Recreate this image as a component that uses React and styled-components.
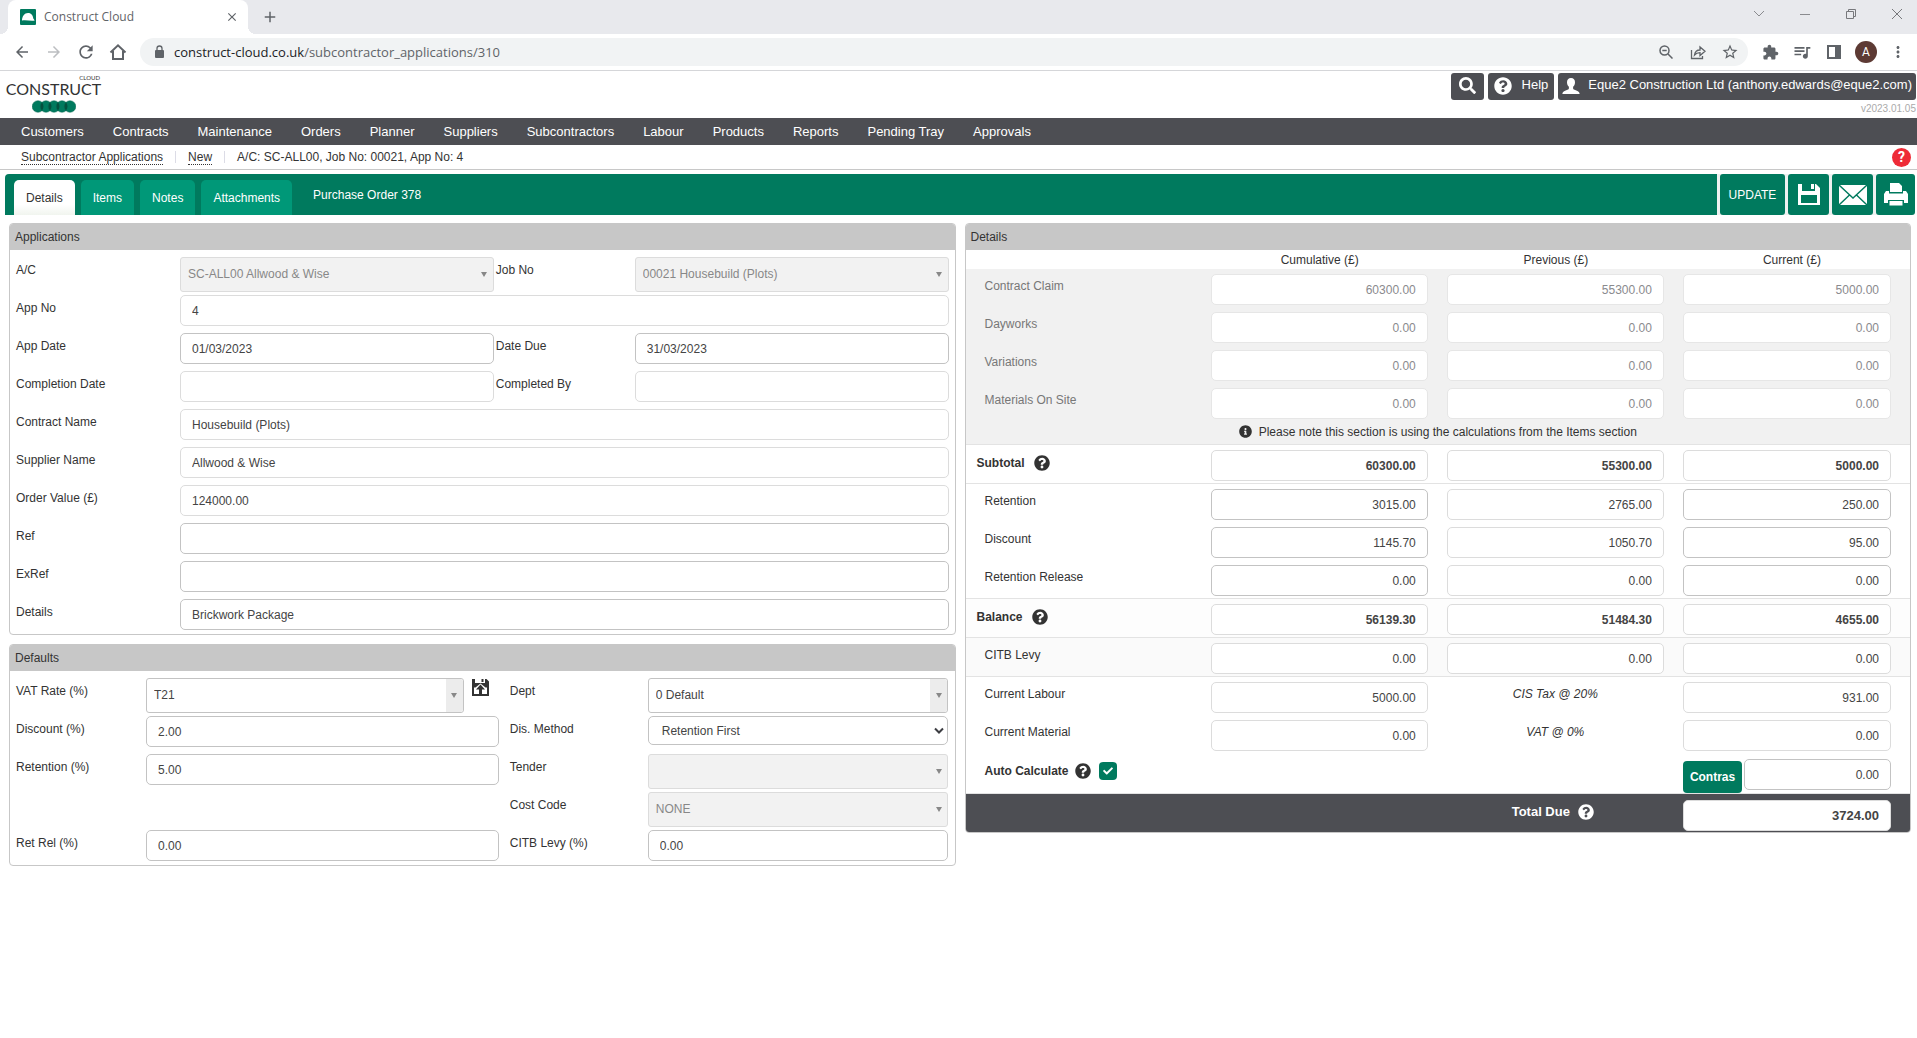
import React from 'react'
import styled, { createGlobalStyle, css } from 'styled-components'
import {
  MdArrowBack, MdArrowForward, MdRefresh, MdStarOutline,
  MdQueueMusic, MdMoreVert, MdClose, MdAdd,
} from 'react-icons/md'
import { FaQuestionCircle, FaInfoCircle, FaSearch, FaCheck } from 'react-icons/fa'

const GlobalStyle = createGlobalStyle`
  * { box-sizing: border-box; }
  body {
    margin: 0;
    background: #fff;
    color: #333;
    font-family: "Liberation Sans", Arial, sans-serif;
    font-size: 12px;
    line-height: 14px;
  }
  button, input, select { font: inherit; color: inherit; }
  a { color: inherit; text-decoration: none; }
`

/* ---------- icons ---------- */

const HelmetIcon = () => (
  <svg width="16" height="16" viewBox="0 0 16 16">
    <rect width="16" height="16" rx="1" fill="#007a5e" />
    <path d="M2 11.500c0-4 2.500-7.500 6-7.500 3.500 0 5 2.500 5.300 5.500l1.400 2c-4 .7-8.500-.8-12.700 0z" fill="#fff" />
  </svg>
)

const HomeIcon = () => (
  <svg width="18" height="18" viewBox="0 0 18 18" fill="none" stroke="#5f6368" strokeWidth="2">
    <path d="M1.500 9.500 9 2.300l7.500 7.200M4 8v8h10V8" />
  </svg>
)

const LockIcon = () => (
  <svg width="14" height="14" viewBox="0 0 14 14">
    <rect x="3" y="5" width="9" height="8" rx="1" fill="#5f6368" />
    <path d="M5 6V3.500a2.500 2.500 0 0 1 5 0V6" fill="none" stroke="#5f6368" strokeWidth="1.300" />
  </svg>
)

const ZoomOutIcon = () => (
  <svg width="14" height="14" viewBox="0 0 14 14" fill="none" stroke="#5f6368" strokeWidth="1.500">
    <circle cx="5.500" cy="5.500" r="4.500" />
    <path d="M9 9l4.500 4.500M3.300 5.500h4.400" />
  </svg>
)

const ShareIcon = () => (
  <svg width="16" height="16" viewBox="0 0 16 16" fill="none" stroke="#5f6368" strokeWidth="1.300">
    <path d="M1.500 6v8.500h11V12M4.500 11c.5-3.500 2.500-5 5.500-5V3l5 4.300-5 4.200V8.700c-2.500 0-4 .6-5.500 2.300z" />
  </svg>
)

const PuzzleIcon = () => (
  <svg width="17" height="17" viewBox="0 0 24 24" fill="#5f6368">
    <path d="M20.500 11H19V7c0-1.100-.9-2-2-2h-4V3.500C13 2.120 11.880 1 10.500 1S8 2.120 8 3.500V5H4c-1.100 0-2 .9-2 2v3.800h1.500c1.490 0 2.700 1.210 2.700 2.700s-1.210 2.700-2.700 2.700H2V20c0 1.100.9 2 2 2h3.800v-1.500c0-1.490 1.210-2.700 2.700-2.700s2.700 1.210 2.700 2.700V22H17c1.100 0 2-.9 2-2v-4h1.500c1.380 0 2.500-1.120 2.500-2.500S21.880 11 20.500 11z" />
  </svg>
)

const SidePanelIcon = () => (
  <svg width="14" height="14" viewBox="0 0 14 14">
    <path d="M0 0h14v14H0zM2 2v10h6V2z" fill="#5f6368" fillRule="evenodd" />
  </svg>
)

const UserIcon = () => (
  <svg width="18" height="16" viewBox="0 0 18 16" fill="#fff">
    <path d="M9 0c2.600 0 4 1.700 4 4.200 0 2-.8 3.700-1.900 4.600v1.500c0 .8.500 1.200 1.400 1.500 2.500.9 4.900 1.600 5.200 4.200H.3c.3-2.600 2.700-3.300 5.200-4.200.9-.3 1.400-.7 1.400-1.500V8.800C5.800 7.900 5 6.200 5 4.200 5 1.700 6.400 0 9 0z" />
  </svg>
)

const FloppyIcon = () => (
  <svg width="22" height="21" viewBox="0 0 22 21">
    <path fillRule="evenodd" fill="#fff" d="M0 0h4v7h13V0h1l4 4v17H0zM3 11v8h16v-8zM13 0h3v5h-3z" />
  </svg>
)

const FloppyUpIcon = () => (
  <svg width="17" height="17" viewBox="0 0 17 17">
    <path fillRule="evenodd" fill="#333" d="M0 0h3v4h10V0h1.500L17 2.500V17H0zM2 8.500V15h13V8.500h-1.500L8.500 4.500l-5 4zM9.500 0h2v3h-2z" />
    <path fill="#333" d="M8.500 5.500 13 10.500h-3V15H7v-4.500H4z" />
  </svg>
)

const MailIcon = () => (
  <svg width="28" height="20" viewBox="0 0 28 20">
    <rect width="28" height="20" fill="#fff" />
    <path d="M0 0l14 13L28 0M0 20l10.500-10M28 20 17.500 10" fill="none" stroke="#007a5e" strokeWidth="1.400" />
  </svg>
)

const PrintIcon = () => (
  <svg width="24" height="23" viewBox="0 0 24 23" fill="#fff">
    <path d="M6 0h9l3 3v6H6zM0 11l2-3h3v2.500h14V8h3l2 3v9h-4v-3H4v3H0zM5.500 18h13v4.500h-13z" />
  </svg>
)

const Chevron = () => (
  <svg width="10" height="8" viewBox="0 0 10 8" fill="none" stroke="#3c3d42" strokeWidth="2">
    <path d="M1 1.500l4 4 4-4" />
  </svg>
)

/* ---------- browser frame ---------- */

const TabStrip = styled.div`
  display: flex;
  align-items: flex-end;
  height: 34px;
  padding-left: 8px;
  background: #e8e9ed;
`
const BrowserTab = styled.div`
  position: relative;
  display: flex;
  align-items: center;
  gap: 8px;
  width: 240px;
  height: 34px;
  padding: 0 8px 0 12px;
  border-radius: 8px 8px 0 0;
  background: #fff;
  color: #5f6368;
  font: 12px/16px "Open Sans", sans-serif;
  span { flex: 1; }
  &::before, &::after {
    content: '';
    position: absolute;
    bottom: 0;
    width: 8px;
    height: 8px;
  }
  &::before {
    left: -8px;
    background: radial-gradient(circle at 0 0, transparent 8px, #fff 8px);
  }
  &::after {
    right: -8px;
    background: radial-gradient(circle at 100% 0, transparent 8px, #fff 8px);
  }
`
const IconButton = styled.button`
  display: flex;
  align-items: center;
  justify-content: center;
  width: ${p => p.$width || 32}px;
  height: 28px;
  padding: 0;
  border: 0;
  background: none;
  color: ${p => (p.$faded ? '#bcbec1' : '#5f6368')};
  font-size: ${p => p.$size || 18}px;
`
const NewTab = styled(IconButton)`
  margin: 0 auto 3px 8px;
`
const WindowControls = styled.div`
  display: flex;
  align-self: flex-start;
  margin-right: -3px;
`
const BrowserBar = styled.div`
  display: flex;
  align-items: center;
  height: 37px;
  padding: 0 3px 0 6px;
  border-bottom: 1px solid #d5d6d9;
`
const AddressBar = styled.div`
  display: flex;
  align-items: center;
  flex: 1;
  height: 28px;
  margin: 0 6px;
  padding: 0 2px 0 12px;
  border-radius: 14px;
  background: #f1f3f4;
  color: #5f6368;
`
const AddressInput = styled.div`
  flex: 1;
  margin-left: 8px;
  font: 13px/20px "Open Sans", sans-serif;
  b { color: #202124; font-weight: 400; }
`
const Avatar = styled.span`
  display: flex;
  align-items: center;
  justify-content: center;
  width: 22px;
  height: 22px;
  margin: 0 5px;
  border-radius: 50%;
  background: #5d3a34;
  color: #fff;
  font-family: Roboto, sans-serif;
`

/* ---------- application header ---------- */

const Header = styled.header`
  display: flex;
  justify-content: space-between;
  height: 47px;
  padding: 2px 1px 0 7px;
`
const Logo = styled.a`
  display: flex;
  flex-direction: column;
  align-items: center;
  width: 93px;
  padding-top: 2px;
  color: #333;
  font-family: Lato, sans-serif;
  font-size: 16px;
  line-height: 16px;
  small {
    align-self: flex-end;
    font-size: 6px;
    line-height: 6px;
  }
  svg { margin-top: 3px; }
`
const HeaderSide = styled.div`
  display: flex;
  flex-direction: column;
  align-items: flex-end;
`
const HeaderButtons = styled.div`
  display: flex;
  gap: 4px;
`
const HeaderButton = styled.button`
  display: flex;
  align-items: center;
  gap: ${p => p.$gap || 0}px;
  height: 27px;
  padding: 0 ${p => p.$pad || 8}px 4px;
  border: 0;
  border-radius: 3px;
  background: #4d4e53;
  color: #fff;
  font-size: 13px;
  svg { position: relative; top: 1px; }
`
const Version = styled.span`
  color: #aaa;
  font-size: 10px;
  margin-top: 2px;
`
const Nav = styled.nav`
  display: flex;
  align-items: center;
  gap: 29px;
  height: 27px;
  padding-left: 21px;
  background: #4d4e53;
  color: #fff;
  font-size: 13px;
`
const Breadcrumb = styled.div`
  display: flex;
  align-items: center;
  height: 25px;
  padding: 0 6px 0 21px;
  border-bottom: 1px solid #c8c8c8;
  a { border-bottom: 1px dotted #333; }
  i {
    width: 1px;
    height: 12px;
    margin: 0 12px;
    background: #dcdce6;
  }
`
const PageHelp = styled.button`
  width: 19px;
  height: 19px;
  margin-left: auto;
  padding: 0;
  border: 0;
  border-radius: 50%;
  background: #ee2b37;
  color: #fff;
  font: 700 14px/19px Roboto, sans-serif;
`

/* ---------- tabs ---------- */

const TabRow = styled.div`
  display: flex;
  gap: 3px;
  height: 41px;
  margin: 4px 2px 0 5px;
  border-radius: 4px;
  background: #eef1f0;
`
const TabBar = styled.div`
  display: flex;
  align-items: flex-end;
  gap: 6px;
  flex: 1;
  padding-left: 9px;
  border-radius: 4px 0 0 0;
  background: #007a5e;
  color: #fff;
`
const Tab = styled.button`
  height: 35px;
  padding: 0 12px;
  border: 0;
  border-radius: 5px 5px 0 0;
  background: ${p => (p.$active ? 'linear-gradient(#fff 70%, #f1f5ef)' : '#009878')};
  color: ${p => (p.$active ? '#333' : '#fff')};
`
const TabTitle = styled.span`
  align-self: center;
  padding-left: 15px;
`
const ActionButton = styled.button`
  display: flex;
  align-items: center;
  justify-content: center;
  width: ${p => p.$width || 41}px;
  padding: 0;
  border: 0;
  border-radius: 3px;
  background: #007a5e;
  color: #fff;
`

/* ---------- panels and fields ---------- */

const Main = styled.main`
  display: grid;
  grid-template-columns: 1fr 1fr;
  align-items: start;
  gap: 9px;
  padding: 8px 6px 8px 9px;
`
const Column = styled.div`
  display: grid;
  gap: 9px;
`
const Panel = styled.section`
  border: 1px solid #c7c7c7;
  border-radius: 4px;
  overflow: hidden;
`
const PanelTitle = styled.h2`
  margin: 0;
  padding: 6px 5px;
  background: #c7c7c7;
  font-size: 12px;
  font-weight: 400;
`
const FieldGrid = styled.div`
  display: grid;
  grid-template-columns: ${p => p.$columns};
  grid-auto-rows: 31px;
  row-gap: 7px;
  padding: 7px 6px 4px;
`
const Label = styled.label`
  padding: 6px 0 0 ${p => p.$indent || 0}px;
`
const fieldBorder = css`
  border: 1px solid ${p => (p.$muted || p.disabled ? '#dcdcdc' : '#c3c3c3')};
  border-radius: 5px;
`
const Input = styled.input`
  ${fieldBorder}
  width: 100%;
  height: 31px;
  min-width: 0;
  padding: 1px 11px 0;
  background: #fff;
  color: #444;
  grid-column: ${p => (p.$wide ? '2 / -1' : 'auto')};
`
const SelectWrap = styled.div`
  position: relative;
  flex: 1;
`
const Select = styled.select`
  ${fieldBorder}
  display: block;
  width: 100%;
  height: ${p => (p.$plain ? 29 : 35)}px;
  padding: 0 20px ${p => (p.$plain ? '0 13px' : '2px 7px')};
  border-radius: ${p => (p.$plain ? 5 : 3)}px;
  appearance: none;
  background: ${p => (p.disabled ? '#f2f2f2' : '#fff')};
  color: ${p => (p.disabled ? '#888' : '#444')};
  opacity: 1;
`
const Arrow = styled.span`
  position: absolute;
  top: 1px;
  right: 1px;
  display: flex;
  align-items: center;
  justify-content: center;
  width: 17px;
  height: ${p => (p.$plain ? 27 : 33)}px;
  border-radius: 0 3px 3px 0;
  background: ${p => (p.$shaded ? '#ececec' : 'none')};
  pointer-events: none;
`
const WithIcon = styled.div`
  display: flex;
  align-items: flex-start;
  gap: 8px;
  padding-right: 10px;
  button { width: 17px; padding: 1px 0; border: 0; background: none; }
`

const Triangle = () => (
  <svg width="6" height="5" viewBox="0 0 6 5"><path d="M0 0h6L3 5z" fill="#888" /></svg>
)

const Dropdown = ({ id, value, disabled, plain }) => (
  <SelectWrap>
    <Select id={id} disabled={disabled} $plain={plain} defaultValue={value}>
      <option>{value}</option>
    </Select>
    <Arrow $shaded={!disabled && !plain} $plain={plain}>{plain ? <Chevron /> : <Triangle />}</Arrow>
  </SelectWrap>
)

const TextField = ({ id, label, value = '', indent, wide, muted }) => (
  <>
    <Label htmlFor={id} $indent={indent}>{label}</Label>
    <Input id={id} defaultValue={value} readOnly={muted} $wide={wide} $muted={muted} />
  </>
)

/* ---------- totals table ---------- */

const Table = styled.table`
  width: 100%;
  table-layout: fixed;
  border-collapse: collapse;
  thead th {
    height: 19px;
    padding: 0 10px;
    font-weight: 400;
  }
`
const Row = styled.tr`
  border-top: ${p => (p.$line ? '1px solid #e3e3e3' : '0')};
  background: ${p => p.$background || 'none'};
  color: ${p => (p.$grey ? '#777' : 'inherit')};
  th {
    padding: 10px 0 0 ${p => (p.$bold ? 11 : 19)}px;
    font-weight: ${p => (p.$bold ? 700 : 400)};
    text-align: left;
    vertical-align: top;
  }
  td {
    padding: 5px 10px 2px 9px;
    vertical-align: top;
  }
  td:last-child { padding-right: 19px; }
`
const Amount = styled(Input)`
  display: block;
  text-align: right;
  color: ${p => (p.$grey ? '#8a8a8e' : '#444')};
  border-color: ${p => (p.$grey ? '#e6e6e6' : p.$muted ? '#dcdcdc' : '#c3c3c3')};
  font-weight: ${p => (p.$bold ? 700 : 400)};
`
const Heading = styled.span`
  display: flex;
  align-items: center;
  gap: ${p => p.$gap || 9}px;
  height: 16px;
`
const TaxNote = styled.div`
  padding-top: 5px;
  font-style: italic;
  text-align: center;
`
const NoteRow = styled.tr`
  background: #f1f1f1;
  td {
    height: 23px;
    padding: 0;
    text-align: center;
  }
  svg { margin-right: 7px; vertical-align: -2px; }
`
const AutoRow = styled(Row)`
  th { padding: 10px 0 0 19px; font-weight: 700; }
  td { padding-top: 6px; padding-bottom: 0; height: 40px; }
`
const CheckWrap = styled.span`
  position: relative;
  display: flex;
  margin-left: 2px;
  input {
    appearance: none;
    width: 18px;
    height: 18px;
    margin: 0;
    border-radius: 4px;
    background: #007a5e;
  }
  svg {
    position: absolute;
    top: 4px;
    left: 4px;
    pointer-events: none;
  }
`
const Contras = styled.div`
  display: flex;
  align-items: flex-start;
  gap: 2px;
  button {
    height: 32px;
    margin-top: 2px;
    padding: 0 7px;
    border: 0;
    border-radius: 4px;
    background: #007a5e;
    color: #fff;
    font-weight: 700;
  }
`
const TotalRow = styled(Row)`
  background: #4d4e53;
  color: #fff;
  font-size: 13px;
  font-weight: 700;
  td { padding-top: 6px; padding-bottom: 1px; }
`
const TotalLabel = styled.div`
  display: flex;
  align-items: center;
  justify-content: center;
  gap: 8px;
  padding: 4px 5px 0 0;
`

const columns = ['Cumulative (£)', 'Previous (£)', 'Current (£)']

const claimRows = [
  ['Contract Claim', '60300.00', '55300.00', '5000.00'],
  ['Dayworks', '0.00', '0.00', '0.00'],
  ['Variations', '0.00', '0.00', '0.00'],
  ['Materials On Site', '0.00', '0.00', '0.00'],
]

const deductionRows = [
  ['Retention', '3015.00', '2765.00', '250.00'],
  ['Discount', '1145.70', '1050.70', '95.00'],
  ['Retention Release', '0.00', '0.00', '0.00'],
]

const AmountRow = ({ data, editable, bold, grey, line, background }) => {
  const [name, ...values] = data
  return (
    <Row $bold={bold} $grey={grey} $line={line} $background={background}>
      <th scope="row">
        {bold ? <Heading>{name}<FaQuestionCircle size={16} /></Heading> : name}
      </th>
      {values.map((value, i) => (
        <td key={columns[i]}>
          <Amount
            aria-label={`${name} ${columns[i]}`}
            defaultValue={value}
            $bold={bold}
            $grey={grey}
            $muted={!editable || i === 1}
          />
        </td>
      ))}
    </Row>
  )
}

const TaxRow = ({ name, value, note, tax, line }) => (
  <Row $line={line}>
    <th scope="row">{name}</th>
    <td><Amount aria-label={name} defaultValue={value} $muted /></td>
    <td><TaxNote>{note}</TaxNote></td>
    <td><Amount aria-label={note} defaultValue={tax} $muted /></td>
  </Row>
)

const navItems = [
  'Customers', 'Contracts', 'Maintenance', 'Orders', 'Planner', 'Suppliers',
  'Subcontractors', 'Labour', 'Products', 'Reports', 'Pending Tray', 'Approvals',
]

const Browser = () => (
  <>
    <TabStrip>
      <BrowserTab>
        <HelmetIcon />
        <span>Construct Cloud</span>
        <IconButton $width={16} $size={14} aria-label="Close tab"><MdClose /></IconButton>
      </BrowserTab>
      <NewTab $width={28} aria-label="New tab"><MdAdd /></NewTab>
      <WindowControls>
        <IconButton $width={46} aria-label="Search tabs">
          <svg width="10" height="6" fill="none" stroke="#8a8b8f"><path d="M0 0l5 5 5-5" /></svg>
        </IconButton>
        <IconButton $width={46} aria-label="Minimise">
          <svg width="10" height="1"><rect width="10" height="1" fill="#8a8b8f" /></svg>
        </IconButton>
        <IconButton $width={46} aria-label="Restore">
          <svg width="10" height="10" fill="none" stroke="#77787c"><path d="M.5 2.500h7v7h-7zM2.500 2.500v-2h7v7h-2" /></svg>
        </IconButton>
        <IconButton $width={46} aria-label="Close">
          <svg width="10" height="10" fill="none" stroke="#77787c"><path d="M0 0l10 10M10 0L0 10" /></svg>
        </IconButton>
      </WindowControls>
    </TabStrip>
    <BrowserBar>
      <IconButton aria-label="Back"><MdArrowBack /></IconButton>
      <IconButton $faded aria-label="Forward"><MdArrowForward /></IconButton>
      <IconButton $size={20} aria-label="Reload"><MdRefresh /></IconButton>
      <IconButton aria-label="Home"><HomeIcon /></IconButton>
      <AddressBar>
        <LockIcon />
        <AddressInput><b>construct-cloud.co.uk</b>/subcontractor_applications/310</AddressInput>
        <IconButton aria-label="Zoom"><ZoomOutIcon /></IconButton>
        <IconButton aria-label="Share"><ShareIcon /></IconButton>
        <IconButton aria-label="Bookmark"><MdStarOutline /></IconButton>
      </AddressBar>
      <IconButton aria-label="Extensions"><PuzzleIcon /></IconButton>
      <IconButton $size={20} aria-label="Media"><MdQueueMusic /></IconButton>
      <IconButton aria-label="Side panel"><SidePanelIcon /></IconButton>
      <Avatar>A</Avatar>
      <IconButton aria-label="Menu"><MdMoreVert /></IconButton>
    </BrowserBar>
  </>
)

const ApplicationsPanel = () => (
  <Panel>
    <PanelTitle>Applications</PanelTitle>
    <FieldGrid $columns="164px 1fr 141px 1fr">
      <Label htmlFor="account">A/C</Label>
      <Dropdown id="account" value="SC-ALL00 Allwood & Wise" disabled />
      <Label htmlFor="job" $indent={2}>Job No</Label>
      <Dropdown id="job" value="00021 Housebuild (Plots)" disabled />
      <TextField id="app-no" label="App No" value="4" wide muted />
      <TextField id="app-date" label="App Date" value="01/03/2023" />
      <TextField id="date-due" label="Date Due" value="31/03/2023" indent={2} />
      <TextField id="completion-date" label="Completion Date" muted />
      <TextField id="completed-by" label="Completed By" indent={2} muted />
      <TextField id="contract-name" label="Contract Name" value="Housebuild (Plots)" wide muted />
      <TextField id="supplier-name" label="Supplier Name" value="Allwood & Wise" wide muted />
      <TextField id="order-value" label="Order Value (£)" value="124000.00" wide muted />
      <TextField id="ref" label="Ref" wide />
      <TextField id="exref" label="ExRef" wide />
      <TextField id="details" label="Details" value="Brickwork Package" wide />
    </FieldGrid>
  </Panel>
)

const DefaultsPanel = () => (
  <Panel>
    <PanelTitle>Defaults</PanelTitle>
    <FieldGrid $columns="130px 353fr 149px 301fr">
      <Label htmlFor="vat-rate">VAT Rate (%)</Label>
      <WithIcon>
        <Dropdown id="vat-rate" value="T21" />
        <button aria-label="Save VAT rate"><FloppyUpIcon /></button>
      </WithIcon>
      <Label htmlFor="dept" $indent={11}>Dept</Label>
      <Dropdown id="dept" value="0 Default" />
      <TextField id="discount" label="Discount (%)" value="2.00" />
      <Label htmlFor="dis-method" $indent={11}>Dis. Method</Label>
      <Dropdown id="dis-method" value="Retention First" plain />
      <TextField id="retention" label="Retention (%)" value="5.00" />
      <Label htmlFor="tender" $indent={11}>Tender</Label>
      <Dropdown id="tender" value="" disabled />
      <span />
      <span />
      <Label htmlFor="cost-code" $indent={11}>Cost Code</Label>
      <Dropdown id="cost-code" value="NONE" disabled />
      <TextField id="ret-rel" label="Ret Rel (%)" value="0.00" />
      <TextField id="citb" label="CITB Levy (%)" value="0.00" indent={11} />
    </FieldGrid>
  </Panel>
)

const DetailsPanel = () => (
  <Panel>
    <PanelTitle>Details</PanelTitle>
    <Table>
      <thead>
        <tr>
          <th />
          {columns.map(name => <th key={name} scope="col">{name}</th>)}
        </tr>
      </thead>
      <tbody>
        {claimRows.map(data => <AmountRow key={data[0]} data={data} grey background="#f1f1f1" />)}
        <NoteRow>
          <td colSpan={4}><FaInfoCircle size={13} />Please note this section is using the calculations from the Items section</td>
        </NoteRow>
        <AmountRow data={['Subtotal', '60300.00', '55300.00', '5000.00']} bold line />
        {deductionRows.map((data, i) => <AmountRow key={data[0]} data={data} editable line={i === 0} />)}
        <AmountRow data={['Balance', '56139.30', '51484.30', '4655.00']} bold line background="#fdfdfd" />
        <AmountRow data={['CITB Levy', '0.00', '0.00', '0.00']} line background="#fafafa" />
        <TaxRow name="Current Labour" value="5000.00" note="CIS Tax @ 20%" tax="931.00" line />
        <TaxRow name="Current Material" value="0.00" note="VAT @ 0%" tax="0.00" />
        <AutoRow>
          <th colSpan={3}>
            <Heading $gap={6}>
              <label htmlFor="auto-calculate">Auto Calculate</label>
              <FaQuestionCircle size={16} />
              <CheckWrap>
                <input id="auto-calculate" type="checkbox" defaultChecked />
                <FaCheck size={10} color="#fff" />
              </CheckWrap>
            </Heading>
          </th>
          <td>
            <Contras>
              <button>Contras</button>
              <Amount aria-label="Contras" defaultValue="0.00" />
            </Contras>
          </td>
        </AutoRow>
        <TotalRow $line>
          <td colSpan={2} />
          <td><TotalLabel>Total Due <FaQuestionCircle size={16} /></TotalLabel></td>
          <td><Amount aria-label="Total Due" defaultValue="3724.00" $bold $muted /></td>
        </TotalRow>
      </tbody>
    </Table>
  </Panel>
)

const App = () => {
  return (
    <>
      <GlobalStyle />
      <Browser />
      <Header>
        <Logo href="#">
          <small>CLOUD</small>
          CONSTRUCT
          <svg width="44" height="13" viewBox="0 0 44 13">
            {[6, 14, 22, 30, 38].map(x => (
              <circle key={x} cx={x} cy="6.500" r="5.800" fill="#007a5e" stroke="#04664e" strokeWidth=".5" />
            ))}
            {[10, 18, 26, 34].map(x => (
              <path key={x} d={`M${x} 2.300c2 2.600 2 5.800 0 8.400c-2-2.600-2-5.800 0-8.400z`} fill="#04503e" />
            ))}
          </svg>
        </Logo>
        <HeaderSide>
          <HeaderButtons>
            <HeaderButton aria-label="Search"><FaSearch size={17} /></HeaderButton>
            <HeaderButton $gap={10} $pad={6}><FaQuestionCircle size={18} />Help</HeaderButton>
            <HeaderButton $gap={8} $pad={4}><UserIcon />Eque2 Construction Ltd (anthony.edwards@eque2.com)</HeaderButton>
          </HeaderButtons>
          <Version>v2023.01.05</Version>
        </HeaderSide>
      </Header>
      <Nav>
        {navItems.map(item => <a key={item} href="#">{item}</a>)}
      </Nav>
      <Breadcrumb>
        <a href="#">Subcontractor Applications</a>
        <i />
        <a href="#">New</a>
        <i />
        <span>A/C: SC-ALL00, Job No: 00021, App No: 4</span>
        <PageHelp>?</PageHelp>
      </Breadcrumb>
      <TabRow>
        <TabBar>
          <Tab $active>Details</Tab>
          <Tab>Items</Tab>
          <Tab>Notes</Tab>
          <Tab>Attachments</Tab>
          <TabTitle>Purchase Order 378</TabTitle>
        </TabBar>
        <ActionButton $width={65}>UPDATE</ActionButton>
        <ActionButton aria-label="Save"><FloppyIcon /></ActionButton>
        <ActionButton aria-label="Email"><MailIcon /></ActionButton>
        <ActionButton $width={39} aria-label="Print"><PrintIcon /></ActionButton>
      </TabRow>
      <Main>
        <Column>
          <ApplicationsPanel />
          <DefaultsPanel />
        </Column>
        <DetailsPanel />
      </Main>
    </>
  )
}

export default App
